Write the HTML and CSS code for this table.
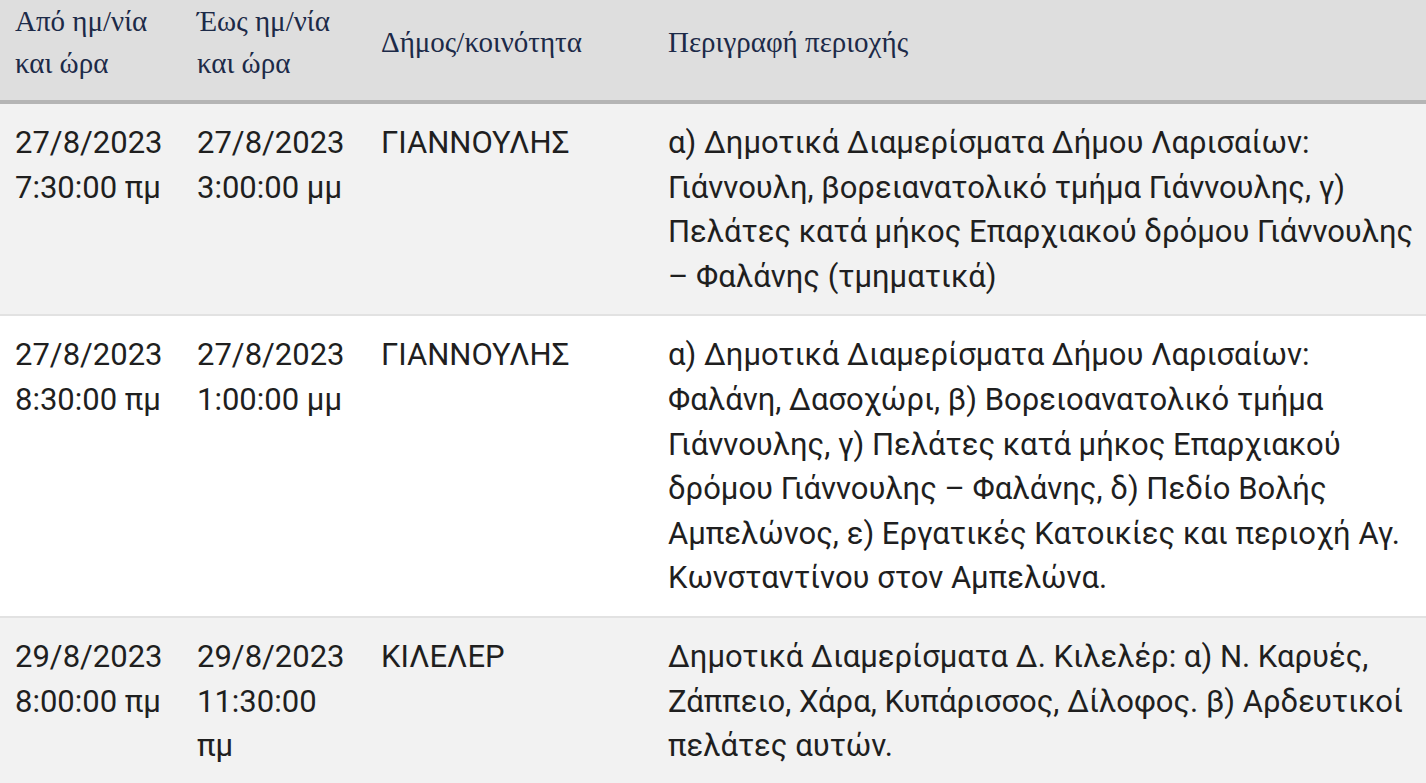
FILE: index.html
```html
<!DOCTYPE html>
<html lang="el">
<head>
<meta charset="utf-8">
<link rel="stylesheet" href="styles.css">
</head>
<body>
<table class="outages">
  <colgroup>
    <col class="c-from">
    <col class="c-to">
    <col class="c-muni">
    <col class="c-desc">
  </colgroup>
  <thead>
    <tr>
      <th>Από ημ/νία<br>και ώρα</th>
      <th>Έως ημ/νία<br>και ώρα</th>
      <th>Δήμος/κοινότητα</th>
      <th>Περιγραφή περιοχής</th>
    </tr>
  </thead>
  <tbody>
    <tr class="odd">
      <td>27/8/2023 7:30:00 πμ</td>
      <td>27/8/2023 3:00:00 μμ</td>
      <td>ΓΙΑΝΝΟΥΛΗΣ</td>
      <td>α) Δημοτικά Διαμερίσματα Δήμου Λαρισαίων: Γιάννουλη, βορειανατολικό τμήμα Γιάννουλης, γ) Πελάτες κατά μήκος Επαρχιακού δρόμου Γιάννουλης – Φαλάνης (τμηματικά)</td>
    </tr>
    <tr class="even">
      <td>27/8/2023 8:30:00 πμ</td>
      <td>27/8/2023 1:00:00 μμ</td>
      <td>ΓΙΑΝΝΟΥΛΗΣ</td>
      <td>α) Δημοτικά Διαμερίσματα Δήμου Λαρισαίων: Φαλάνη, Δασοχώρι, β) Βορειοανατολικό τμήμα Γιάννουλης, γ) Πελάτες κατά μήκος Επαρχιακού δρόμου Γιάννουλης – Φαλάνης, δ) Πεδίο Βολής Αμπελώνος, ε) Εργατικές Κατοικίες και περιοχή Αγ. Κωνσταντίνου στον Αμπελώνα.</td>
    </tr>
    <tr class="odd">
      <td>29/8/2023 8:00:00 πμ</td>
      <td>29/8/2023 11:30:00 πμ</td>
      <td>ΚΙΛΕΛΕΡ</td>
      <td>Δημοτικά Διαμερίσματα Δ. Κιλελέρ: α) Ν. Καρυές, Ζάππειο, Χάρα, Κυπάρισσος, Δίλοφος. β) Αρδευτικοί πελάτες αυτών.</td>
    </tr>
  </tbody>
</table>
</body>
</html>
```

FILE: styles.css
```css
html, body {
  margin: 0;
  padding: 0;
  background: #ffffff;
}

.outages {
  width: 1426px;
  border-collapse: collapse;
  table-layout: fixed;
}

.c-from { width: 182px; }
.c-to { width: 184px; }
.c-muni { width: 287px; }
.c-desc { width: 773px; }

.outages th {
  padding: 0 15px 16px 15px;
  background: #dedede;
  border-bottom: 4px solid #b5b5b5;
  font-family: "Liberation Serif", "Times New Roman", serif;
  font-weight: normal;
  font-size: 29px;
  line-height: 42px;
  color: #1c2a48;
  text-align: left;
  vertical-align: middle;
}

.outages td {
  padding: 17px 8px 15px 15px;
  font-family: Roboto, "Noto Sans", sans-serif;
  font-size: 31px;
  line-height: 44.6px;
  color: #1f1f1f;
  vertical-align: top;
  border-bottom: 2px solid #e2e2e2;
}

.outages tr.odd td { background: #f2f2f2; }
.outages tr.even td { background: #ffffff; }
```
